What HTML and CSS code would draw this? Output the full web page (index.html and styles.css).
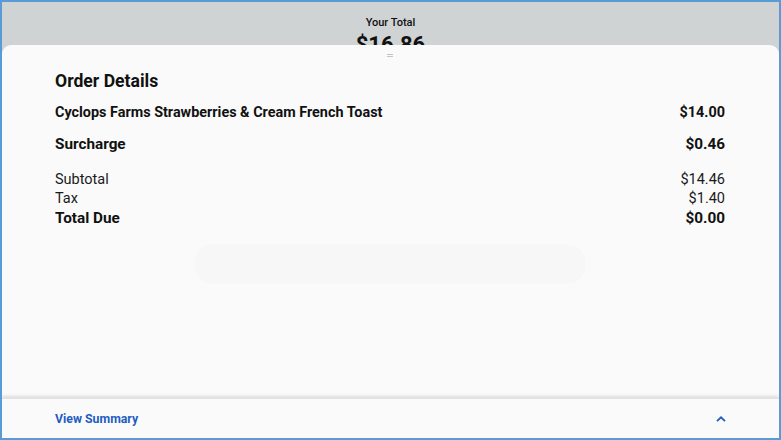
FILE: index.html
```html
<!DOCTYPE html>
<html>
<head>
<meta charset="utf-8">
<link rel="stylesheet" href="styles.css">
</head>
<body>
<div class="frame">
  <header class="top">
    <div class="top-label">Your Total</div>
    <div class="top-amount">$16.86</div>
  </header>
  <section class="sheet">
    <div class="handle"><span></span><span></span></div>
    <h1 class="title">Order Details</h1>
    <div class="row item"><span>Cyclops Farms Strawberries &amp; Cream French Toast</span><span>$14.00</span></div>
    <div class="row surcharge"><span>Surcharge</span><span>$0.46</span></div>
    <div class="totals">
      <div class="row plain"><span>Subtotal</span><span>$14.46</span></div>
      <div class="row plain"><span>Tax</span><span>$1.40</span></div>
      <div class="row due"><span>Total Due</span><span>$0.00</span></div>
    </div>
    <div class="ghost"></div>
  </section>
  <footer class="footer">
    <span class="summary">View Summary</span>
    <svg class="chev" width="10" height="6" viewBox="0 0 10 6"><path d="M1 5.2 L5 1.3 L9 5.2" fill="none" stroke="#1f5cc4" stroke-width="1.8"/></svg>
  </footer>
</div>
</body>
</html>
```

FILE: styles.css
```css
html, body { margin: 0; padding: 0; }
body { font-family: Roboto, "Liberation Sans", sans-serif; color: #111; }
.frame {
  width: 781px; height: 440px; box-sizing: border-box;
  border: 2px solid #5b9bd5;
  background: #cfd3d4;
  display: flex; flex-direction: column;
  overflow: hidden;
}
.top {
  height: 43px; flex: none; overflow: hidden;
  display: flex; flex-direction: column; align-items: center;
  padding-top: 14px; box-sizing: border-box;
}
.top-label { font-size: 11px; font-weight: 500; line-height: 14px; color: #111; }
.top-amount { font-size: 22px; font-weight: 700; line-height: 26px; margin-top: 2px; }
.sheet {
  flex: 1; background: #fafafa;
  border-radius: 9px 9px 0 0;
  padding: 9px 54px 0 53px;
  display: flex; flex-direction: column;
}
.handle { align-self: center; display: flex; flex-direction: column; gap: 1px; height: 3px; }
.handle span { display: block; width: 6px; height: 1px; background: #c4c4c4; }
.title { margin: 13px 0 0; font-size: 17.6px; font-weight: 700; line-height: 22px; }
.row { display: flex; justify-content: space-between; }
.item { margin-top: 11px; font-size: 14.4px; font-weight: 700; line-height: 20px; }
.surcharge { margin-top: 11px; font-size: 15.3px; font-weight: 700; line-height: 20px; }
.totals { margin-top: 16px; display: flex; flex-direction: column; }
.plain { font-size: 14.5px; font-weight: 400; line-height: 19px; color: #1a1a1a; }
.due { font-size: 15.3px; font-weight: 700; line-height: 20px; }
.ghost {
  align-self: center; width: 392px; height: 40px; margin-top: 16px;
  border-radius: 20px; background: #f7f7f7;
}
.footer {
  height: 40px; flex: none; background: #fafafa;
  box-shadow: 0 -2px 3px rgba(0,0,0,0.12);
  border-top: 1px solid #e2e2e2;
  box-sizing: border-box;
  display: flex; align-items: center; justify-content: space-between;
  padding: 1px 53px 0 53px;
  position: relative;
}
.summary { font-size: 12.3px; font-weight: 700; color: #1f5cc4; }
.chev { display: block; }
```
